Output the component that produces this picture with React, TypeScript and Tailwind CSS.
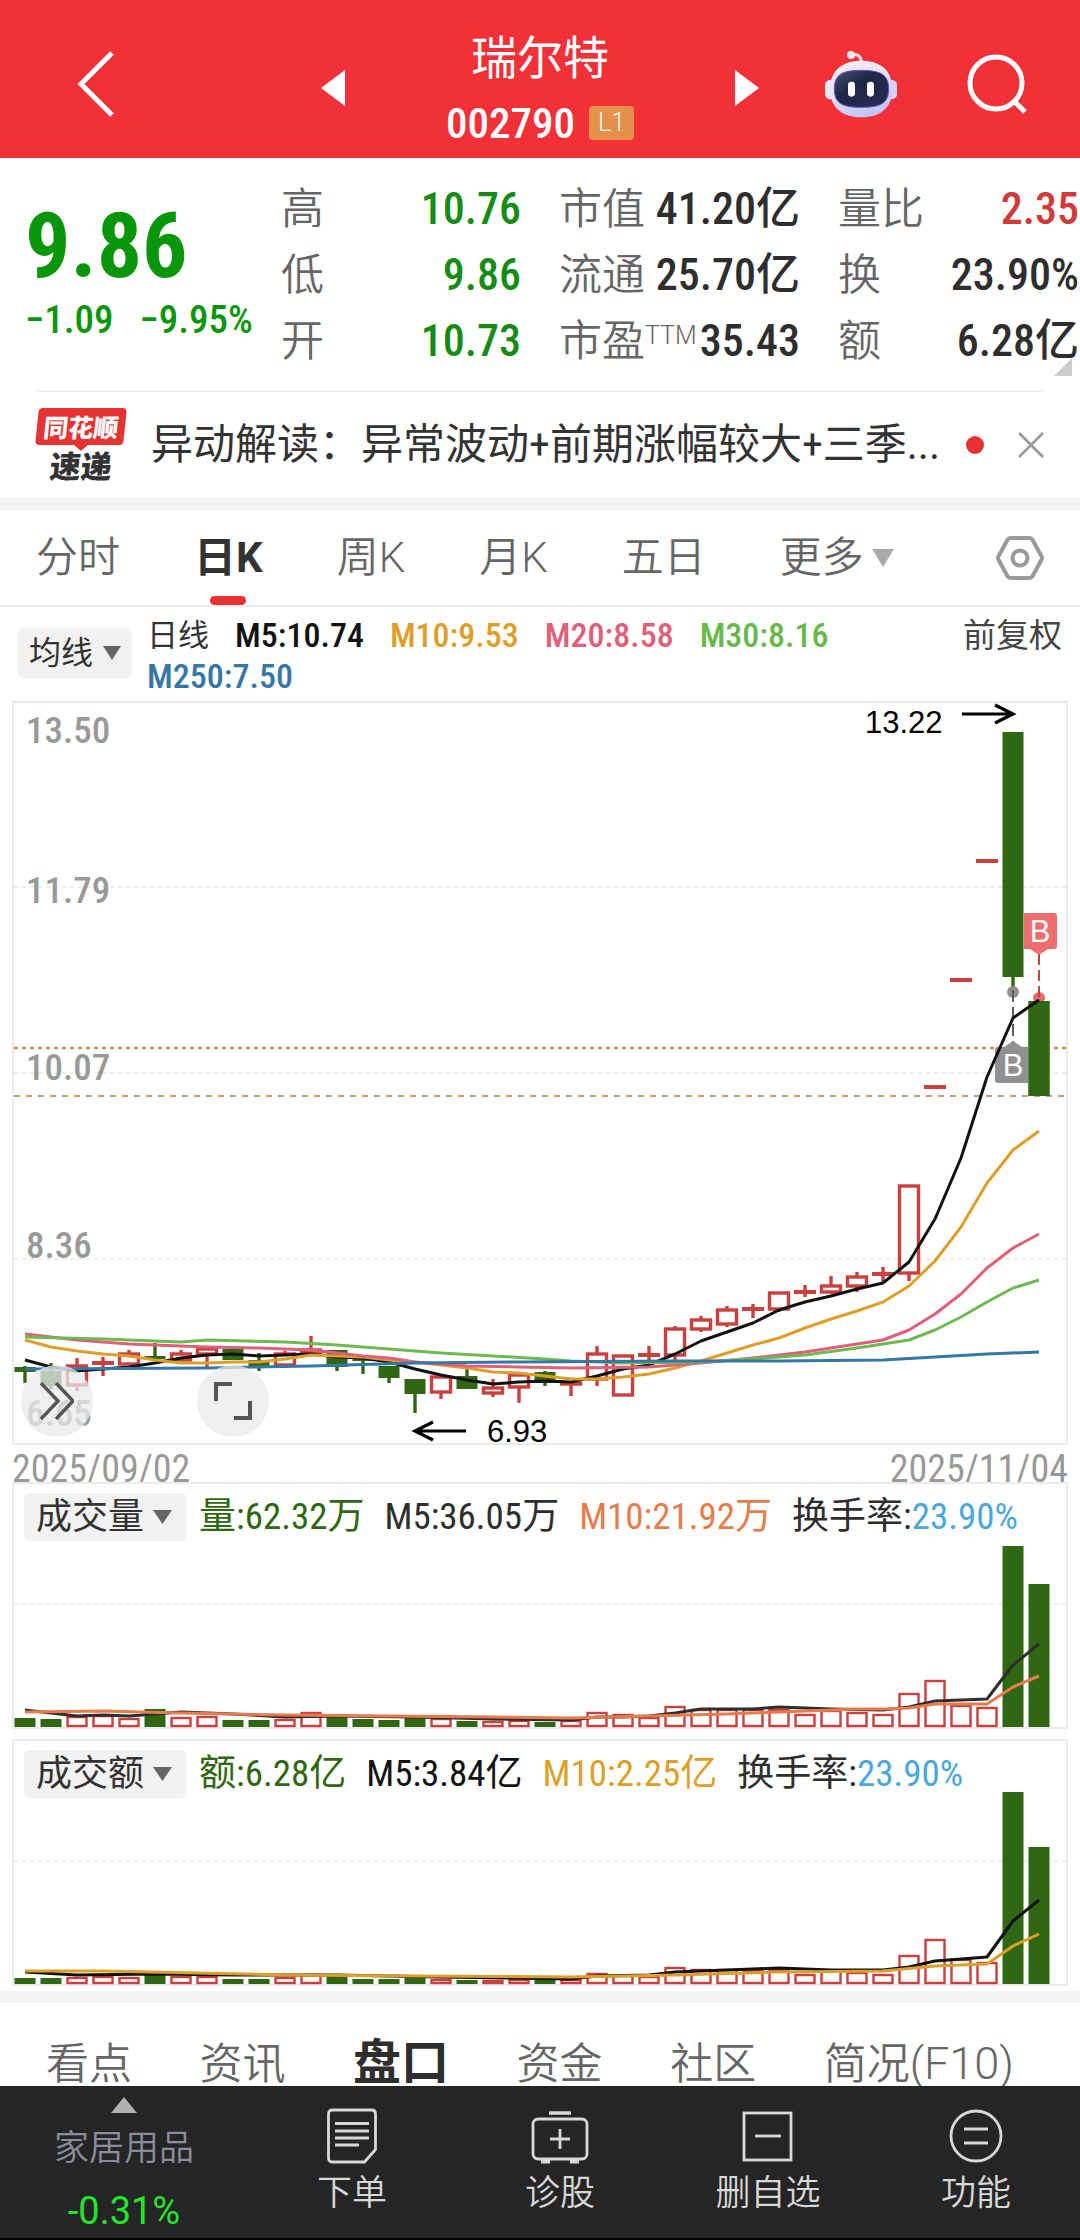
import React from "react";

type Kind = "up" | "down";
type Candle = { top: number; bottom: number; high: number; low: number; kind: Kind };

const GREEN = "#2f6712";
const RED = "#c9403e";

const STEP = 26;
const FIRST_X = 25;
const xAt = (i: number) => FIRST_X + i * STEP;

const c = (kind: Kind, top: number, bottom: number, high = top, low = bottom): Candle => ({
  kind,
  top,
  bottom,
  high,
  low,
});

const candles: Candle[] = [
  c("down", 1367, 1372, 1366, 1383),
  c("down", 1371, 1386, 1363, 1389),
  c("up", 1365, 1385, 1358, 1391),
  c("up", 1363, 1363, 1357, 1376),
  c("up", 1353, 1364, 1350, 1365),
  c("down", 1356, 1359, 1343, 1360),
  c("up", 1353, 1360, 1350, 1361),
  c("up", 1348, 1354, 1348, 1367),
  c("down", 1349, 1360),
  c("down", 1360, 1367, 1353, 1371),
  c("up", 1353, 1365, 1351, 1368),
  c("up", 1349, 1353, 1336, 1354),
  c("down", 1350, 1367, 1350, 1371),
  c("down", 1359, 1361, 1359, 1374),
  c("down", 1366, 1378, 1366, 1383),
  c("down", 1379, 1394, 1379, 1413),
  c("up", 1376, 1392, 1376, 1399),
  c("down", 1376, 1389, 1368, 1389),
  c("up", 1387, 1393, 1379, 1397),
  c("up", 1374, 1387, 1374, 1403),
  c("down", 1372, 1383, 1371, 1386),
  c("up", 1382, 1384, 1382, 1396),
  c("up", 1353, 1379, 1346, 1386),
  c("up", 1355, 1395),
  c("up", 1355, 1355, 1346, 1361),
  c("up", 1328, 1355, 1326, 1360),
  c("up", 1319, 1329, 1316, 1332),
  c("up", 1309, 1324, 1306, 1327),
  c("up", 1309, 1309, 1304, 1318),
  c("up", 1292, 1309, 1292, 1312),
  c("up", 1292, 1292, 1285, 1297),
  c("up", 1285, 1292, 1276, 1294),
  c("up", 1276, 1286, 1272, 1292),
  c("up", 1274, 1274, 1267, 1283),
  c("up", 1185, 1273, 1185, 1281),
  c("up", 1087, 1087),
  c("up", 980, 980),
  c("up", 861, 861),
  c("down", 732, 977, 732, 990),
  c("down", 1001, 1096),
];

type Point = [number, number];
const seq = (ys: number[]): Point[] => ys.map((y, i) => [i, y]);

const ma5 = seq([
  1360, 1367, 1371, 1369, 1367, 1363, 1358, 1355, 1354, 1356, 1355, 1354, 1357, 1358, 1362, 1369, 1375, 1380, 1384,
  1382, 1381, 1382, 1376, 1369, 1365, 1354, 1341, 1332, 1323, 1310, 1302, 1296, 1289, 1283, 1262, 1219, 1158, 1077,
  1018, 1000,
]);
const ma10 = seq([
  1340, 1347, 1351, 1354, 1356, 1360, 1363, 1363, 1362, 1362, 1359, 1355, 1356, 1357, 1360, 1362, 1365, 1368, 1372,
  1373, 1376, 1379, 1379, 1377, 1374, 1368, 1361, 1353, 1345, 1338, 1328, 1319, 1311, 1302, 1286, 1261, 1227, 1183,
  1150, 1131,
]);
const ma20: Point[] = [
  [0, 1334], [2, 1340], [4, 1344], [7, 1347], [9, 1348], [11, 1350], [12, 1353], [13, 1356], [14, 1358], [15, 1362],
  [16, 1364], [17, 1366], [19, 1367], [21, 1368], [24, 1367], [26, 1363], [28, 1358], [30, 1352], [32, 1344],
  [33, 1340], [34, 1330], [35, 1314], [36, 1294], [37, 1268], [38, 1248], [39, 1234],
];
const ma30: Point[] = [
  [0, 1337], [3, 1339], [6, 1342], [7, 1340], [10, 1342], [12, 1345], [14, 1349], [16, 1353], [18, 1356], [20, 1359],
  [21, 1361], [23, 1363], [26, 1362], [28, 1359], [30, 1355], [32, 1348], [33, 1344], [34, 1340], [35, 1330],
  [36, 1317], [37, 1302], [38, 1288], [39, 1280],
];
const ma250: Point[] = [
  [0, 1369], [7, 1368], [11, 1366], [15, 1363], [19, 1362], [25, 1361], [29, 1361], [33, 1360], [35, 1357],
  [37, 1354], [39, 1352],
];

const volume = [
  9, 8, 11, 12, 9, 18, 10, 11, 7, 7, 8, 15, 10, 8, 7, 9, 9, 6, 6, 7, 5, 7, 15, 13, 10, 21, 18, 18, 18, 18, 13, 17, 15,
  13, 34, 47, 22, 20, 181, 143,
];
const volumeMa5: Point[] = [
  [0, 17], [1, 14], [2, 11], [3, 12], [4, 11], [5, 13], [6, 15], [8, 13], [10, 10], [12, 11], [15, 10], [18, 8],
  [21, 7], [22, 10], [23, 10], [24, 11], [25, 14], [26, 18], [28, 18], [29, 20], [30, 19], [31, 18], [33, 17],
  [34, 20], [35, 26], [36, 27], [37, 28], [38, 62], [39, 83],
];
const volumeMa10: Point[] = [
  [0, 15], [3, 16], [6, 14], [10, 12], [14, 11], [18, 10], [21, 9], [24, 11], [27, 13], [30, 16], [32, 18], [33, 18],
  [34, 19], [35, 23], [37, 23], [38, 40], [39, 51],
];

const amount = [
  6, 6, 7, 8, 7, 13, 8, 8, 5, 5, 7, 10, 8, 5, 5, 7, 5, 4, 4, 5, 4, 5, 11, 9, 8, 17, 15, 15, 14, 15, 10, 14, 12, 10, 29,
  45, 25, 22, 192, 137,
];
const amountMa5: Point[] = [
  [0, 12], [2, 9], [5, 10], [8, 9], [12, 9], [16, 7], [21, 5], [22, 8], [24, 9], [25, 12], [27, 14], [29, 16],
  [31, 14], [33, 14], [34, 17], [35, 23], [36, 25], [37, 27], [38, 63], [39, 84],
];
const amountMa10: Point[] = [
  [0, 13], [3, 13], [10, 9], [15, 8], [21, 7], [25, 9], [29, 12], [33, 13], [35, 18], [37, 20], [38, 38], [39, 50],
];

const toPoints = (pts: Point[], map: (v: number) => number = (v) => v) =>
  pts.map(([i, v]) => `${xAt(i)},${map(v)}`).join(" ");

function Line({ pts, color, map }: { pts: Point[]; color: string; map?: (v: number) => number }) {
  return (
    <polyline points={toPoints(pts, map)} fill="none" stroke={color} strokeWidth="3" strokeLinejoin="round" />
  );
}

function CandleMark({ candle, x }: { candle: Candle; x: number }) {
  const { top, bottom, high, low, kind } = candle;
  const color = kind === "down" ? GREEN : RED;
  return (
    <g stroke={color} strokeWidth="3.4">
      {high < top && <line x1={x} x2={x} y1={high} y2={top} />}
      {low > bottom && <line x1={x} x2={x} y1={bottom} y2={low} />}
      {top === bottom ? (
        <line x1={x - 11} x2={x + 11} y1={top} y2={top} strokeWidth="4" />
      ) : kind === "down" ? (
        <rect x={x - 10.5} y={top} width="21" height={bottom - top} fill={color} stroke="none" />
      ) : (
        <rect x={x - 9.5} y={top + 1} width="19" height={Math.max(bottom - top - 1, 1)} fill="#fff" />
      )}
    </g>
  );
}

function PriceChart() {
  const axis: [string, number][] = [
    ["13.50", 743],
    ["11.79", 903],
    ["10.07", 1080],
    ["8.36", 1258],
    ["6.65", 1426],
  ];
  return (
    <svg viewBox="14 703 1052 740" className="block w-full overflow-visible" role="img" aria-label="日K">
      <g stroke="#ececec" strokeWidth="2" strokeDasharray="4 4">
        <line x1="14" x2="1066" y1="887" y2="887" />
        <line x1="14" x2="1066" y1="1073" y2="1073" />
        <line x1="14" x2="1066" y1="1259" y2="1259" />
      </g>
      <g fill="#999" className="font-['Roboto_Condensed',sans-serif] text-[37px] font-medium">
        {axis.map(([t, y]) => (
          <text key={t} x="26" y={y}>
            {t}
          </text>
        ))}
      </g>
      <line x1="14" x2="1066" y1="1048" y2="1048" stroke="#cf8f4c" strokeWidth="2.4" strokeDasharray="4 4" />
      <line x1="14" x2="1066" y1="1096" y2="1096" stroke="#b9a37c" strokeWidth="2" strokeDasharray="6 6" />
      {candles.map((k, i) => (
        <CandleMark key={i} candle={k} x={xAt(i)} />
      ))}

      <circle cx="1013" cy="992" r="6" fill="#8f8f8f" />
      <line x1="1013" x2="1013" y1="990" y2="1042" stroke="#5c5c5c" strokeWidth="2" strokeDasharray="12 5" />
      <path d="M998 1047h6l9-6 9 6h6v36h-30a3 3 0 0 1-3-3v-30a3 3 0 0 1 3-3z" fill="#909090" />
      <circle cx="1039" cy="998" r="6" fill="#e36b6b" />
      <rect x="1028.500" y="1001" width="21" height="95" fill={GREEN} />
      <line x1="1039" x2="1039" y1="954" y2="998" stroke={RED} strokeWidth="2" strokeDasharray="11 5" />
      <path d="M1024 913h30a3 3 0 0 1 3 3v30a3 3 0 0 1-3 3h-6l-9 6-9-6h-6z" fill="#ee6e6f" />
      <g fill="#fff" textAnchor="middle" className="font-['Liberation_Sans',sans-serif] text-[31px]">
        <text x="1013" y="1076">B</text>
        <text x="1040" y="942">B</text>
      </g>

      <Line pts={ma5} color="#111" />
      <Line pts={ma10} color="#dd9f28" />
      <Line pts={ma20} color="#e0607a" />
      <Line pts={ma30} color="#6fb955" />
      <Line pts={ma250} color="#3577a5" />

      <g fill="#000" className="font-['Liberation_Sans',sans-serif] text-[31px]">
        <text x="865" y="733">13.22</text>
        <text x="487" y="1442">6.93</text>
      </g>
      <g stroke="#000" strokeWidth="3.2" fill="none">
        <path d="M962 714h50M995 705l18 9-18 9" />
        <path d="M466 1431h-50M433 1422l-18 9 18 9" />
      </g>
    </svg>
  );
}

function BarChart({
  values,
  fast,
  slow,
  fastColor,
  slowColor,
  height,
  gridAt,
  label,
}: {
  values: number[];
  fast: Point[];
  slow: Point[];
  fastColor: string;
  slowColor: string;
  height: number;
  gridAt: number;
  label: string;
}) {
  const flip = (v: number) => height - v;
  return (
    <svg viewBox={`14 0 1052 ${height}`} className="block w-full overflow-visible" role="img" aria-label={label}>
      <line x1="14" x2="1066" y1={flip(gridAt)} y2={flip(gridAt)} stroke="#ececec" strokeWidth="2" strokeDasharray="4 4" />
      {values.map((v, i) => {
        const x = xAt(i);
        return candles[i].kind === "down" ? (
          <rect key={i} x={x - 10.5} y={flip(v)} width="21" height={v} fill={GREEN} />
        ) : (
          <rect
            key={i}
            x={x - 9.5}
            y={flip(v) + 1}
            width="19"
            height={Math.max(v - 2, 1)}
            fill="#fff"
            stroke={RED}
            strokeWidth="2.4"
          />
        );
      })}
      <Line pts={fast} color={fastColor} map={flip} />
      <Line pts={slow} color={slowColor} map={flip} />
    </svg>
  );
}

function Caret({ className }: { className: string }) {
  return (
    <svg viewBox="0 0 20 14" preserveAspectRatio="none" className={className} fill="currentColor" aria-hidden="true">
      <path d="M0 0h20L10 14z" />
    </svg>
  );
}

function IndicatorHeader({ name, items }: { name: string; items: [string, string, string?, string?][] }) {
  return (
    <div className="flex items-center pt-[9px] pl-[10px] text-[36px] leading-[48px] whitespace-nowrap">
      <button className="flex items-center gap-[9px] rounded-md bg-[#f2f2f2] pr-[15px] pl-3 text-[#333]">
        {name}
        <Caret className="h-[14px] w-[19px] text-[#666]" />
      </button>
      <div className="ml-3 flex gap-5 text-[37px]">
        {items.map(([text, cls, extra, extraCls]) => (
          <span key={text} className={cls}>
            {text}
            {extra && <span className={extraCls}>{extra}</span>}
          </span>
        ))}
      </div>
    </div>
  );
}

function Header() {
  return (
    <header className="grid grid-cols-[1fr_438px_1fr] items-center bg-[#f23038] pt-[33px] pb-[15px] text-white">
      <button aria-label="返回" className="ml-[77px] w-[38px] pb-2">
        <svg viewBox="0 0 38 66" className="block w-full" fill="none" stroke="currentColor" strokeWidth="5">
          <path d="M35 2L4 33l31 31" />
        </svg>
      </button>
      <div className="flex items-center justify-between">
        <button aria-label="上一只">
          <svg viewBox="0 0 24 36" className="block h-9 w-6" fill="currentColor">
            <path d="M24 0v36L0 18z" />
          </svg>
        </button>
        <div className="flex flex-col items-center gap-5">
          <h1 className="text-[46px] leading-[50px]">瑞尔特</h1>
          <div className="flex items-center gap-[14px]">
            <span className="text-[43px] leading-10 font-medium">002790</span>
            <span className="rounded-sm bg-[#e5904b] px-[9px] font-['Roboto',sans-serif] text-[25px] leading-[34px] font-light">
              L1
            </span>
          </div>
        </div>
        <button aria-label="下一只">
          <svg viewBox="0 0 24 36" className="block h-9 w-6" fill="currentColor">
            <path d="M0 0l24 18L0 36z" />
          </svg>
        </button>
      </div>
      <div className="flex items-center justify-between pr-[53px] pb-2 pl-[66px]">
        <button aria-label="智能助手">
          <svg viewBox="75 60 216 204" className="block h-[68px] w-[72px]">
            <defs>
              <linearGradient id="head" x1="0" y1="0" x2="0.4" y2="1">
                <stop offset="0" stopColor="#fdeef3" />
                <stop offset="0.55" stopColor="#e3e0f8" />
                <stop offset="1" stopColor="#c3c6f4" />
              </linearGradient>
              <linearGradient id="visor" x1="0" y1="0" x2="1" y2="1">
                <stop offset="0" stopColor="#47506f" />
                <stop offset="0.4" stopColor="#1e2747" />
                <stop offset="1" stopColor="#252e52" />
              </linearGradient>
            </defs>
            <path d="M156 74c14-3 27 3 28 22" fill="none" stroke="#fbdde3" strokeWidth="9" />
            <circle cx="153" cy="75" r="12" fill="#fbe3ea" />
            <rect x="75" y="150" width="34" height="58" rx="15" fill="#efe9fb" />
            <rect x="257" y="150" width="34" height="58" rx="15" fill="#d9d3f6" />
            <path
              d="M184 92c58 0 93 30 93 85s-35 85-93 85-94-30-94-85 36-85 94-85z"
              fill="url(#head)"
            />
            <path
              d="M184 121c56 0 82 12 82 56s-26 55-82 55-81-11-81-55 25-56 81-56z"
              fill="url(#visor)"
              stroke="#6a4fd0"
              strokeWidth="3"
            />
            <rect x="144" y="155" width="21" height="45" rx="10" fill="#fff" />
            <rect x="201" y="155" width="21" height="45" rx="10" fill="#fff" />
          </svg>
        </button>
        <button aria-label="搜索">
          <svg viewBox="0 0 60 60" className="block size-[60px]" fill="none" stroke="currentColor" strokeWidth="5">
            <circle cx="29" cy="29" r="26" />
            <path d="M47 47l11 11" />
          </svg>
        </button>
      </div>
    </header>
  );
}

function Stat({ label, sup, value, cls }: { label: string; sup?: string; value: string; cls: string }) {
  return (
    <div className="flex items-baseline justify-between leading-[66px] whitespace-nowrap">
      <dt className="text-[43px] font-[350] text-[#666]">
        {label}
        {sup && (
          <sup className="relative -top-3 align-baseline font-['Roboto',sans-serif] text-[25px] leading-none font-light">
            {sup}
          </sup>
        )}
      </dt>
      <dd className={cls}>{value}</dd>
    </div>
  );
}

function Quote() {
  const green = "text-[44px] font-medium text-[#168c16]";
  const dark = "text-[44px] font-medium text-[#2e2e2e]";
  return (
    <section className="relative grid grid-cols-[281fr_278fr_279fr_242fr] pt-[18px] pb-4">
      <div className="pt-[21px] pl-[25px] text-[#0a960a]">
        <div className="text-[90px] leading-[100px] font-bold">9.86</div>
        <div className="mt-[2px] flex gap-[26px] text-[39px] leading-[42px] font-medium whitespace-nowrap">
          <span>−1.09</span>
          <span>−9.95%</span>
        </div>
      </div>
      <dl className="pr-[38px]">
        <Stat label="高" value="10.76" cls={green} />
        <Stat label="低" value="9.86" cls={green} />
        <Stat label="开" value="10.73" cls={green} />
      </dl>
      <dl className="pr-[38px]">
        <Stat label="市值" value="41.20亿" cls={dark} />
        <Stat label="流通" value="25.70亿" cls={dark} />
        <Stat label="市盈" sup="TTM" value="35.43" cls={dark} />
      </dl>
      <dl className="pr-px">
        <Stat label="量比" value="2.35" cls="text-[44px] font-medium text-[#cf3a3a]" />
        <Stat label="换" value="23.90%" cls={dark} />
        <Stat label="额" value="6.28亿" cls={dark} />
      </dl>
      <svg viewBox="0 0 18 18" className="absolute right-2 bottom-[14px] size-[18px]" aria-hidden="true">
        <path d="M18 0v18H0z" fill="#ccc" />
      </svg>
    </section>
  );
}

function News() {
  return (
    <section className="mx-9 flex items-center border-t-2 border-[#efefef] pt-4 pb-[17px]">
      <div className="flex w-[90px] shrink-0 flex-col items-center">
        <div className="relative w-[88px]">
          <div className="-skew-x-6 rounded-[4px] bg-[#e53232] text-center font-['Noto_Sans_CJK_SC',sans-serif] text-[25px] leading-[37px] font-black whitespace-nowrap text-white">
            同花顺
          </div>
          <svg viewBox="0 0 16 7" className="absolute top-[36px] left-9 h-[7px] w-4" aria-hidden="true">
            <path d="M0 0h16L8 7z" fill="#e53232" />
          </svg>
        </div>
        <div className="mt-1 -skew-x-6 font-['Noto_Sans_CJK_SC',sans-serif] text-[31px] leading-[32px] font-black text-[#333]">
          速递
        </div>
      </div>
      <a href="#news" className="ml-[25px] grow text-[42px] leading-[56px] whitespace-nowrap text-[#333]">
        异动解读：异常波动+前期涨幅较大+三季...
      </a>
      <span className="size-[18px] shrink-0 rounded-full bg-[#e53232]" />
      <button aria-label="关闭" className="ml-[34px] shrink-0 text-[#999]">
        <svg viewBox="0 0 26 26" className="block size-[26px]" fill="none" stroke="currentColor" strokeWidth="2.6">
          <path d="M1 1l24 24M25 1L1 25" />
        </svg>
      </button>
    </section>
  );
}

function PeriodTabs() {
  const tab = "font-[350] text-[#666]";
  return (
    <nav className="flex items-center gap-[74px] border-t-[12px] border-b-2 border-t-[#f4f4f4] border-b-[#ececec] pr-9 pl-9 font-['Roboto','Noto_Sans_CJK_SC',sans-serif] text-[42px] leading-[95px]">
      <button className={tab}>分时</button>
      <button className="relative font-bold text-[#333]">
        日K
        <span className="absolute bottom-0 left-1/2 h-[9px] w-9 -translate-x-1/2 rounded-full bg-[#e53232]" />
      </button>
      <button className={tab}>周K</button>
      <button className={tab}>月K</button>
      <button className={tab}>五日</button>
      <button className="flex items-center gap-2 font-[350] text-[#666]">
        更多
        <Caret className="h-[18px] w-[22px] text-[#aaa]" />
      </button>
      <button aria-label="设置" className="ml-auto text-[#999]">
        <svg viewBox="0 0 48 46" className="block h-[46px] w-12" fill="none" stroke="currentColor" strokeWidth="4">
          <path d="M14.500 3h19q2 0 3 1.700l9 16.500q1 1.800 0 3.600l-9 16.500q-1 1.700-3 1.700h-19q-2 0-3-1.700l-9-16.500q-1-1.800 0-3.600l9-16.500q1-1.700 3-1.700z" />
          <circle cx="24" cy="23" r="7.500" />
        </svg>
      </button>
    </nav>
  );
}

function MovingAverages() {
  return (
    <div className="flex items-start pt-2 pr-[18px] pb-1 pl-[18px] text-[34px] leading-[41px]">
      <button className="mt-[13px] flex shrink-0 items-center gap-[10px] rounded-md bg-[#f2f2f2] px-[11px] text-[32px] leading-[50px] text-[#333]">
        均线
        <Caret className="h-[14px] w-[18px] text-[#666]" />
      </button>
      <div className="ml-[15px] flex flex-1 flex-wrap gap-x-[26px] font-medium">
        <span className="text-[31px] font-normal text-[#333]">日线</span>
        <span className="text-[#111]">M5:10.74</span>
        <span className="text-[#dd9f28]">M10:9.53</span>
        <span className="text-[#e0607a]">M20:8.58</span>
        <span className="text-[#68b94c]">M30:8.16</span>
        <span className="text-[#3577a5]">M250:7.50</span>
      </div>
      <button className="text-[33px] text-[#444]">前复权</button>
    </div>
  );
}

function FloatButton({ label, children }: { label: string; children: React.ReactNode }) {
  return (
    <button aria-label={label} className="flex size-[72px] items-center justify-center rounded-full bg-[#e9e9e9]/75 text-[#555]">
      {children}
    </button>
  );
}

function SectionTabs() {
  const tab = "text-[43px] font-[350] text-[#666]";
  return (
    <nav className="flex h-[95px] items-baseline justify-between overflow-hidden border-t-[12px] border-[#f4f4f4] pt-[26px] pr-[66px] pl-[46px] leading-[68px] whitespace-nowrap">
      <button className={tab}>看点</button>
      <button className={tab}>资讯</button>
      <button className="text-[48px] font-bold text-[#2e2e2e]">盘口</button>
      <button className={tab}>资金</button>
      <button className={tab}>社区</button>
      <button className={tab}>
        简况<span className="font-['Roboto',sans-serif] text-[45px] font-light">(F10)</span>
      </button>
    </nav>
  );
}

function NavItem({ label, children }: { label: string; children: React.ReactNode }) {
  return (
    <button className="flex flex-col items-center gap-2 pt-[21px] text-[35px] font-[350] text-[#d8d8d8]">
      <svg viewBox="0 0 58 58" className="block size-[58px]" fill="none" stroke="currentColor" strokeWidth="2.8">
        {children}
      </svg>
      <span className="leading-[42px]">{label}</span>
    </button>
  );
}

function BottomNav() {
  return (
    <nav className="grid grow grid-cols-[248fr_208fr_208fr_208fr_208fr] items-start border-b-2 border-black bg-[#252525]">
      <button className="flex flex-col items-center pt-[11px]">
        <svg viewBox="0 0 26 16" className="h-4 w-[26px]" fill="#b0b0b0" aria-hidden="true">
          <path d="M13 0l13 16H0z" />
        </svg>
        <span className="mt-[15px] text-[35px] leading-[42px] font-[350] text-[#8b8d9c]">家居用品</span>
        <span className="mt-[20px] font-['Roboto',sans-serif] text-[38px] leading-[42px] text-[#22e62a]">-0.31%</span>
      </button>
      <NavItem label="下单">
        <path d="M9.500 3h39q4 0 4 4v35.500L41.500 55h-32q-4 0-4-4V7q0-4 4-4z" />
        <path d="M12 16.500h34M12 24h34M12 31h34M12 38h24" />
      </NavItem>
      <NavItem label="诊股">
        <path d="M18 6h22" strokeWidth="3.500" />
        <rect x="2" y="12" width="54" height="40" rx="5" />
        <path d="M29 22v20M19 32h20" />
        <path d="M10 54.500h9M39 54.500h9" strokeWidth="4" />
      </NavItem>
      <NavItem label="删自选">
        <rect x="5" y="6" width="47" height="47" />
        <path d="M16 29h26" />
      </NavItem>
      <NavItem label="功能">
        <circle cx="29" cy="29" r="25" />
        <path d="M17 22h24M17 36h24" />
      </NavItem>
    </nav>
  );
}

export default function App() {
  return (
    <div className="flex min-h-screen w-full flex-col overflow-hidden bg-white font-['Roboto_Condensed','Noto_Sans_CJK_SC',sans-serif]">
      <Header />
      <Quote />
      <News />
      <PeriodTabs />
      <MovingAverages />
      <section className="relative mx-3 border-2 border-[#ebebeb]">
        <PriceChart />
        <div className="absolute bottom-[6px] left-[7px] flex gap-[104px]">
          <FloatButton label="展开">
            <svg viewBox="0 0 34 38" className="h-[38px] w-[34px]" fill="none" stroke="currentColor" strokeWidth="3.400">
              <path d="M1 1l17 18L1 37M16 1l17 18-17 18" />
            </svg>
          </FloatButton>
          <FloatButton label="全屏">
            <svg viewBox="0 0 38 38" className="size-[38px]" fill="none" stroke="currentColor" strokeWidth="4">
              <path d="M2 19V2h16M36 19v17H20" />
            </svg>
          </FloatButton>
        </div>
      </section>
      <div className="mx-3 flex justify-between pt-[11px] text-[38px] leading-[26px] text-[#999]">
        <span>2025/09/02</span>
        <span>2025/11/04</span>
      </div>
      <section className="mx-3 border-2 border-[#ebebeb]">
        <IndicatorHeader
          name="成交量"
          items={[
            ["量:62.32万", "text-[#2f6712]"],
            ["M5:36.05万", "text-[#2e2e2e]"],
            ["M10:21.92万", "text-[#e87b4c]"],
            ["换手率:", "text-[#2e2e2e]", "23.90%", "text-[#4aa8dc]"],
          ]}
        />
        <BarChart
          label="成交量"
          values={volume}
          fast={volumeMa5}
          slow={volumeMa10}
          fastColor="#2e2e2e"
          slowColor="#e87b4c"
          height={186}
          gridAt={123}
        />
      </section>
      <section className="mx-3 mt-[10px] mb-[5px] border-2 border-[#ebebeb]">
        <IndicatorHeader
          name="成交额"
          items={[
            ["额:6.28亿", "text-[#2f6712]"],
            ["M5:3.84亿", "text-[#111]"],
            ["M10:2.25亿", "text-[#dd9f28]"],
            ["换手率:", "text-[#2e2e2e]", "23.90%", "text-[#4aa8dc]"],
          ]}
        />
        <BarChart
          label="成交额"
          values={amount}
          fast={amountMa5}
          slow={amountMa10}
          fastColor="#111"
          slowColor="#dd9f28"
          height={186}
          gridAt={123}
        />
      </section>
      <SectionTabs />
      <BottomNav />
    </div>
  );
}
